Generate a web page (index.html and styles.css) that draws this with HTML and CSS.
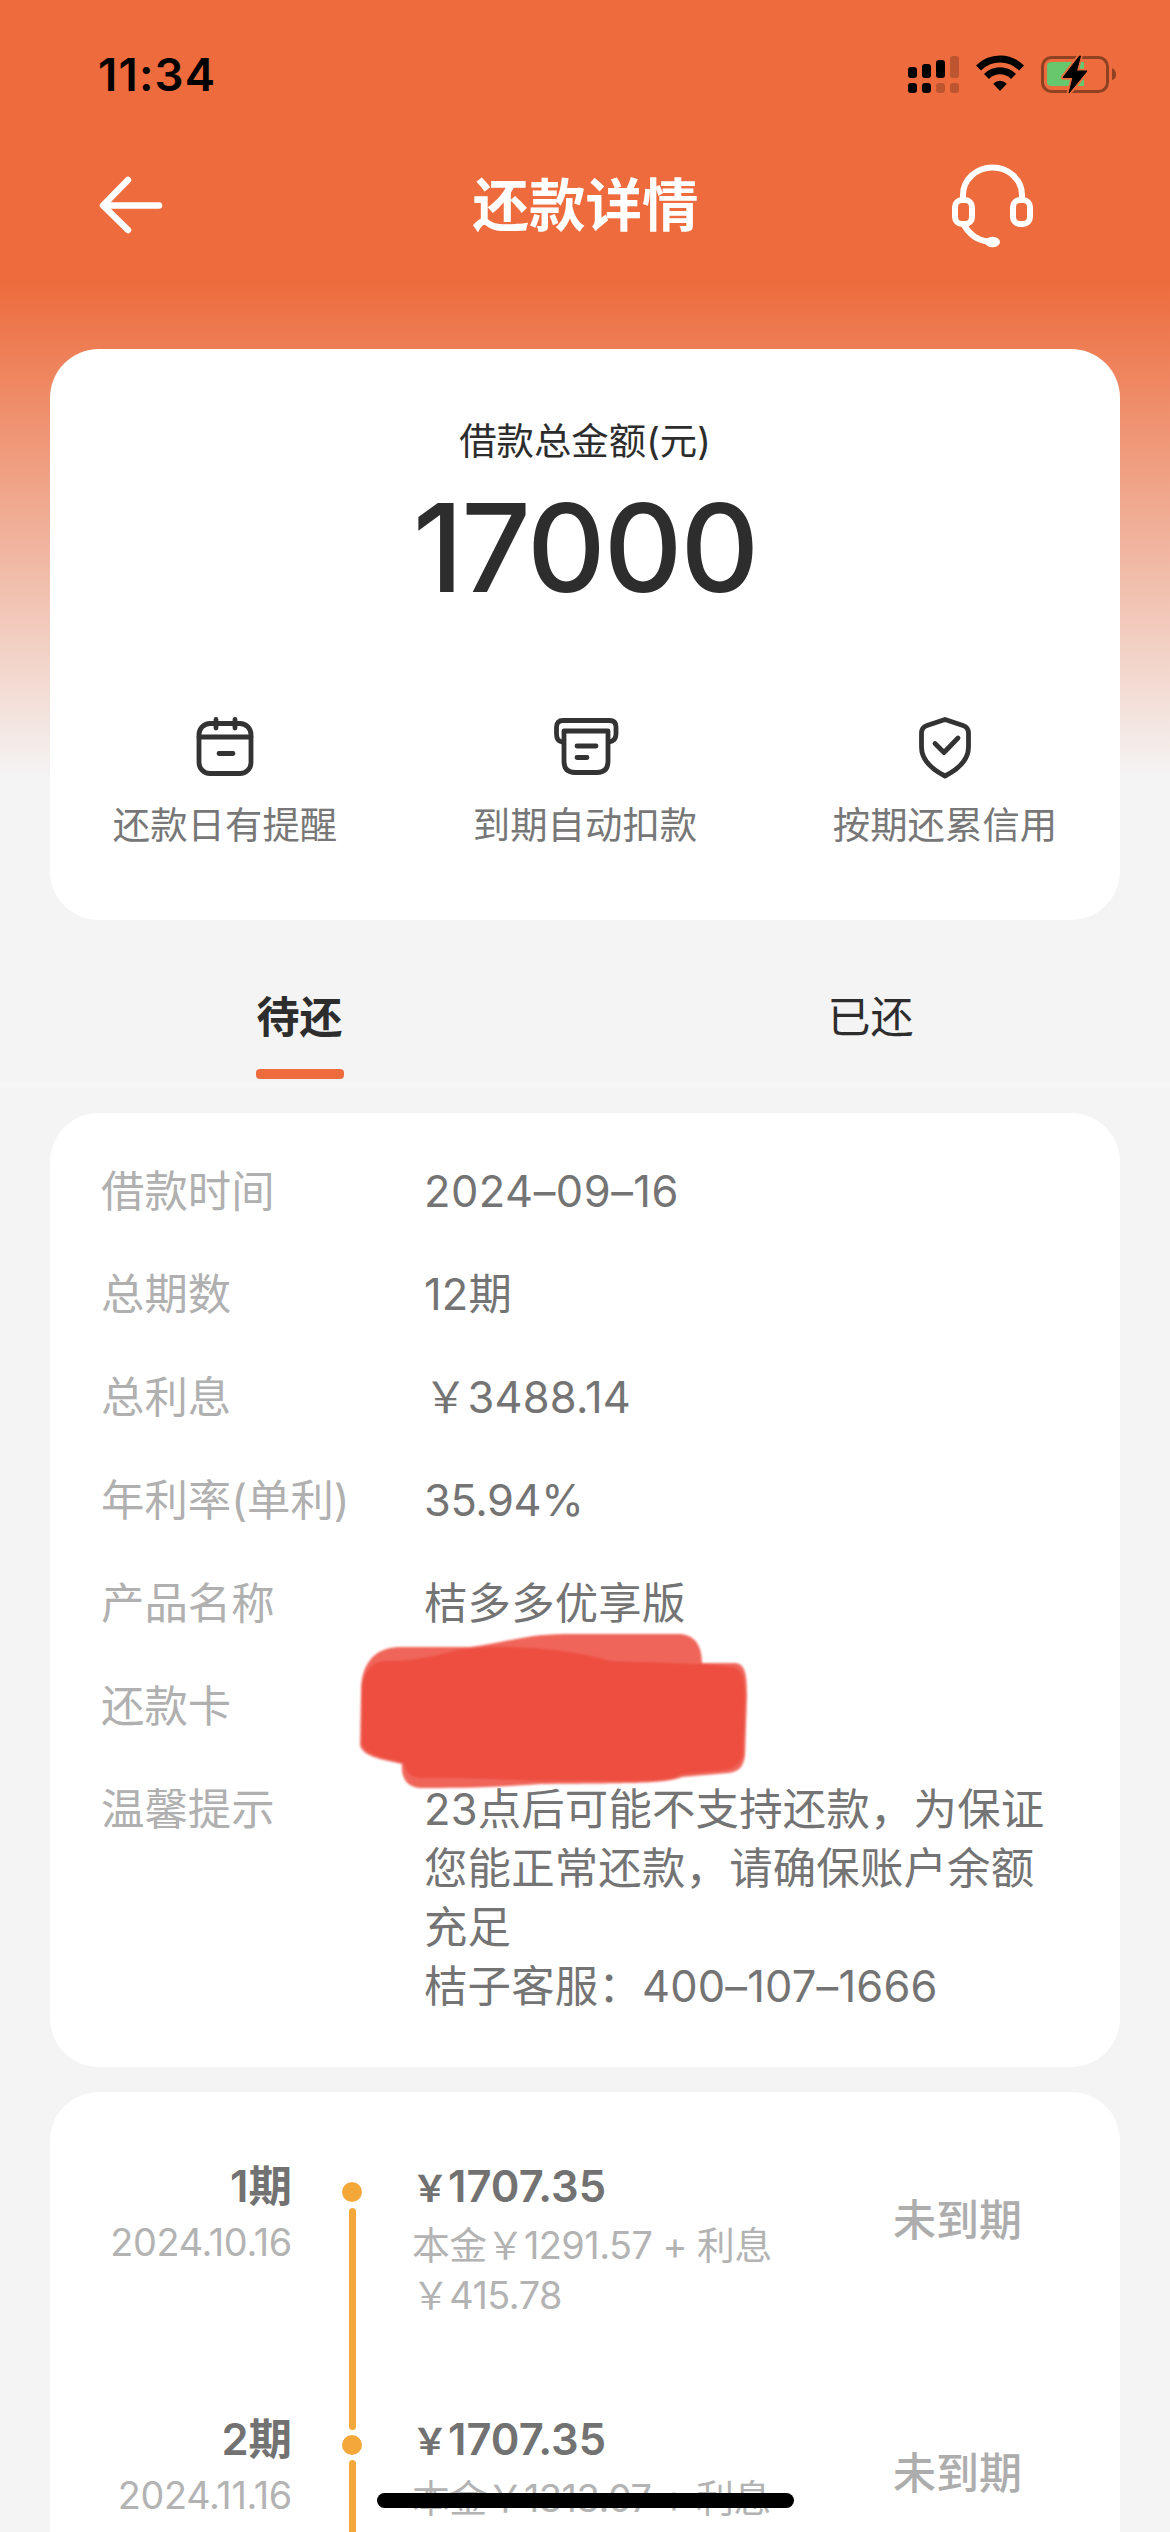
FILE: index.html
```html
<!DOCTYPE html>
<html lang="zh-CN">
<head>
<meta charset="utf-8">
<title>还款详情</title>
<link rel="stylesheet" href="styles.css">
</head>
<body>
<header class="header">
  <div class="status-bar">
    <span class="clock">11:34</span>
    <div class="status-icons">
      <svg class="signal" width="46" height="40" viewBox="0 0 46 40">
        <rect x="0" y="13" width="9" height="11" rx="3"/>
        <rect x="14" y="10" width="9" height="14" rx="3"/>
        <rect x="28" y="6" width="9" height="18" rx="3"/>
        <rect x="42" y="2" width="9" height="22" rx="3" class="dim"/>
        <rect x="0" y="29" width="9" height="10" rx="3"/>
        <rect x="14" y="29" width="9" height="10" rx="3"/>
        <rect x="28" y="29" width="9" height="10" rx="3" class="dim"/>
        <rect x="42" y="29" width="9" height="10" rx="3" class="dim"/>
      </svg>
      <svg class="wifi" width="50" height="38" viewBox="0 0 50 38">
        <path d="M3.500 14A30 30 0 0 1 46.500 14M11.500 22.500A19 19 0 0 1 38.500 22.500" fill="none" stroke="#000" stroke-width="7"/>
        <path d="M25 37L18.200 29.800Q25 23.500 31.800 29.800Z"/>
      </svg>
      <svg class="battery" width="78" height="40" viewBox="0 0 78 40">
        <rect x="1.500" y="3.500" width="65" height="34" rx="9" fill="none" stroke="#8f4124" stroke-width="3"/>
        <path d="M71 14Q75 16 75 20.500T71 26Z" fill="#8f4124"/>
        <path d="M10 8H43V32H10Q6 32 6 28V12Q6 8 10 8Z" fill="#66c76c"/>
        <path d="M38.500 2L22 23.500H32L28 39L46 17H35.500L39.500 2Z" stroke="#ed6b3c" stroke-width="4.500" stroke-linejoin="round"/>
        <path d="M38.500 2L22 23.500H32L28 39L46 17H35.500L39.500 2Z" stroke="#000" stroke-width="1" stroke-linejoin="round"/>
      </svg>
    </div>
  </div>
  <nav class="nav">
    <svg class="back" width="64" height="60" viewBox="0 0 64 60">
      <path d="M29 4L4 29.500L29 54M5 29.500H60" />
    </svg>
    <h1 class="title">还款详情</h1>
    <svg class="headset" width="84" height="84" viewBox="0 0 84 84">
      <path d="M13 36V31A29.500 27.500 0 0 1 72 31V36"/>
      <rect x="5" y="36" width="17" height="24" rx="7"/>
      <rect x="63" y="36" width="17" height="24" rx="7"/>
      <path d="M14 61Q22 75 37 77.500"/>
      <ellipse cx="42.500" cy="78" rx="7.500" ry="5.200" class="mic"/>
    </svg>
  </nav>
</header>

<main class="content">
  <section class="card summary">
    <p class="summary-label">借款总金额(元)</p>
    <p class="summary-amount">17000</p>
    <ul class="features">
      <li class="feature">
        <svg width="68" height="64" viewBox="0 0 68 64">
          <rect x="8" y="8.500" width="52" height="50" rx="11"/>
          <path d="M8 22H60M25 4.500V13M44 4.500V13M28 38.500H42"/>
        </svg>
        <span>还款日有提醒</span>
      </li>
      <li class="feature">
        <svg width="68" height="64" viewBox="0 0 68 64">
          <path d="M11 27Q5.500 26 5.500 19V12Q5.500 5.500 12 5.500H58.500Q65 5.500 65 12V19Q65 26 58 27"/>
          <path d="M13 16H57V46Q57 57.500 46 57.500H24Q13 57.500 13 46Z"/>
          <path d="M26 31H45M26 42.500H36"/>
        </svg>
        <span>到期自动扣款</span>
      </li>
      <li class="feature">
        <svg width="68" height="64" viewBox="0 0 68 64">
          <path d="M34 4.500L52 10.500Q57.500 12.500 57.500 18V32Q57.500 49 34 61Q10.500 49 10.500 32V18Q10.500 12.500 16 10.500Z"/>
          <path d="M24 28.500L33 37.500L47 23"/>
        </svg>
        <span>按期还累信用</span>
      </li>
    </ul>
  </section>

  <div class="tabs">
    <div class="tab active">待还</div>
    <div class="tab">已还</div>
  </div>

  <section class="card info">
    <dl class="rows">
      <dt>借款时间</dt><dd class="date">2024–09–16</dd>
      <dt>总期数</dt><dd>12期</dd>
      <dt>总利息</dt><dd>￥3488.14</dd>
      <dt>年利率(单利)</dt><dd class="rate">35.94%</dd>
      <dt>产品名称</dt><dd>桔多多优享版</dd>
      <dt>还款卡</dt>
      <dd class="masked">
        <svg class="marker" width="440" height="200" viewBox="0 0 440 200">
          <path fill="#f0655a" d="M21 80C21 56 32 37 58 36L130 36C160 33 185 23 225 23H340C356 24 362 36 362 52H395C405 53 407 62 407 85L405 145C403 157 398 161 388 162L342 166C325 173 290 172 200 173C150 177 110 177 80 177C66 176 61 166 62 153C45 149 22 146 20 134Z"/>
          <path fill="#ed4e40" d="M22 82C22 64 30 50 46 50C70 51 95 45 122 38C170 33 230 38 270 50L362 53L394 56C403 60 405 69 405 88L403 143C401 153 394 157 385 159L342 163C325 173 290 169 200 170C150 168 110 166 82 167C69 167 66 160 64 152C45 147 24 144 22 132Z"/>
        </svg>
      </dd>
      <dt>温馨提示</dt>
      <dd>23点后可能不支持还款，为保证<br>您能正常还款，请确保账户余额<br>充足<br>桔子客服：400–107–1666</dd>
    </dl>
  </section>

  <section class="card plan">
    <article class="period">
      <div class="when"><strong>1期</strong><span>2024.10.16</span></div>
      <div class="track"><i class="dot"></i><i class="line"></i></div>
      <div class="amount"><strong><small>￥</small>1707.35</strong><span>本金￥1291.57 + 利息<br>￥415.78</span></div>
      <div class="state">未到期</div>
    </article>
    <article class="period">
      <div class="when"><strong>2期</strong><span>2024.11.16</span></div>
      <div class="track"><i class="dot"></i><i class="line"></i></div>
      <div class="amount"><strong><small>￥</small>1707.35</strong><span>本金￥1313.07 + 利息</span></div>
      <div class="state">未到期</div>
    </article>
  </section>
</main>
<div class="home-indicator"></div>
</body>
</html>
```
FILE: styles.css
```css
* { box-sizing: border-box; margin: 0; padding: 0; }

body {
  position: relative;
  width: 1170px;
  height: 2532px;
  overflow: hidden;
  background: linear-gradient(#ed6b3c 0, #ed6b3c 280px, #f4f4f4 776px) #f4f4f4;
  font-family: Inter, "Noto Sans CJK SC", sans-serif;
  color: #2d2d2d;
}

svg { display: block; overflow: visible; flex: none; }

.header { height: 349px; }

.status-bar {
  display: flex;
  justify-content: space-between;
  padding: 54px 51px 0 98px;
  height: 132px;
  color: #000;
}
.clock { font-size: 45.5px; font-weight: 600; line-height: 42px; letter-spacing: 1.2px; }
.status-icons { display: flex; }
.signal { margin-right: 21px; }
.wifi { margin-right: 16px; }
.dim { fill: #bd5630; }

.nav {
  display: flex;
  align-items: center;
  justify-content: space-between;
  height: 148px;
  padding: 0 136px 0 99px;
}
.back path { fill: none; stroke: #fff; stroke-width: 6.5; stroke-linecap: round; stroke-linejoin: round; }
.title { font-size: 56.5px; font-weight: 600; line-height: 80px; color: #fff; margin-left: 58px; }
.headset { fill: none; stroke: #fff; stroke-width: 6; }
.mic { fill: #fff; stroke: none; }

.card { margin: 0 50px; background: #fff; border-radius: 49px; }

.summary { height: 571px; padding-top: 68px; text-align: center; }
.summary-label { font-size: 37.4px; line-height: 50px; }
.summary-amount { margin-top: 18px; font-size: 122px; font-weight: 500; line-height: 126px; letter-spacing: -2px; }

.features {
  display: flex;
  justify-content: center;
  margin-top: 104px;
  list-style: none;
}
.feature {
  display: flex;
  flex: none;
  flex-direction: column;
  align-items: center;
  width: 360px;
  font-size: 37.4px;
  line-height: 50px;
  color: #777;
}
.feature svg { margin-bottom: 22px; fill: none; stroke: #333; stroke-width: 4.8; stroke-linecap: round; stroke-linejoin: round; }

.tabs {
  display: flex;
  height: 168px;
  padding: 67px 14px 0;
  border-bottom: 5px solid #f6f6f6;
  margin-bottom: 25px;
}
.tab {
  display: flex;
  flex: 1;
  flex-direction: column;
  align-items: center;
  font-size: 43px;
  line-height: 60px;
}
.tab.active { font-weight: 600; }
.tab.active::after {
  content: "";
  width: 88px;
  height: 10px;
  margin-top: 22px;
  border-radius: 4px;
  background: #ed6b3c;
}

.info { height: 954px; padding: 49px 0 0 51px; }
.rows {
  display: grid;
  grid-template-columns: 323px 1fr;
  row-gap: 44px;
  font-size: 43.4px;
  line-height: 59px;
}
.rows dt { color: #b0b0b0; }
.rows dd { color: #747474; white-space: nowrap; letter-spacing: 0.2px; }
.rows .date { letter-spacing: 0.5px; }
.rows .rate { letter-spacing: -0.4px; }
.masked { position: relative; }
.marker { position: absolute; left: -84px; top: -66px; filter: blur(1.2px); }

.plan {
  height: 440px;
  margin-top: 25px;
  padding-top: 64px;
  border-radius: 49px 49px 0 0;
  overflow: hidden;
}
.period {
  display: grid;
  grid-template-columns: 242px 120px 481px 1fr;
  height: 252.7px;
}
.when { display: flex; flex-direction: column; align-items: flex-end; }
.when span, .amount span {
  margin-top: 1px;
  font-size: 37.8px;
  line-height: 50px;
  letter-spacing: -0.3px;
  color: #b3b3b3;
  white-space: nowrap;
}
.when strong, .amount strong { font-size: 43.5px; font-weight: 600; line-height: 60px; color: #727272; }
.amount { display: flex; flex-direction: column; }
.amount span { letter-spacing: -0.5px; }
.amount small { font-size: 36px; }
.track { display: flex; flex-direction: column; align-items: center; padding-top: 26px; }
.dot { width: 20px; height: 20px; border-radius: 50%; background: #f4a83a; }
.line { width: 7px; height: 222px; margin-top: 5.5px; border-radius: 4px; background: #f4a83a; }
.state { padding-top: 34px; font-size: 43px; font-weight: 500; line-height: 60px; color: #adadad; }

.home-indicator {
  position: absolute;
  left: 377px;
  top: 2493px;
  width: 417px;
  height: 15px;
  border-radius: 8px;
  background: #000;
}
```
